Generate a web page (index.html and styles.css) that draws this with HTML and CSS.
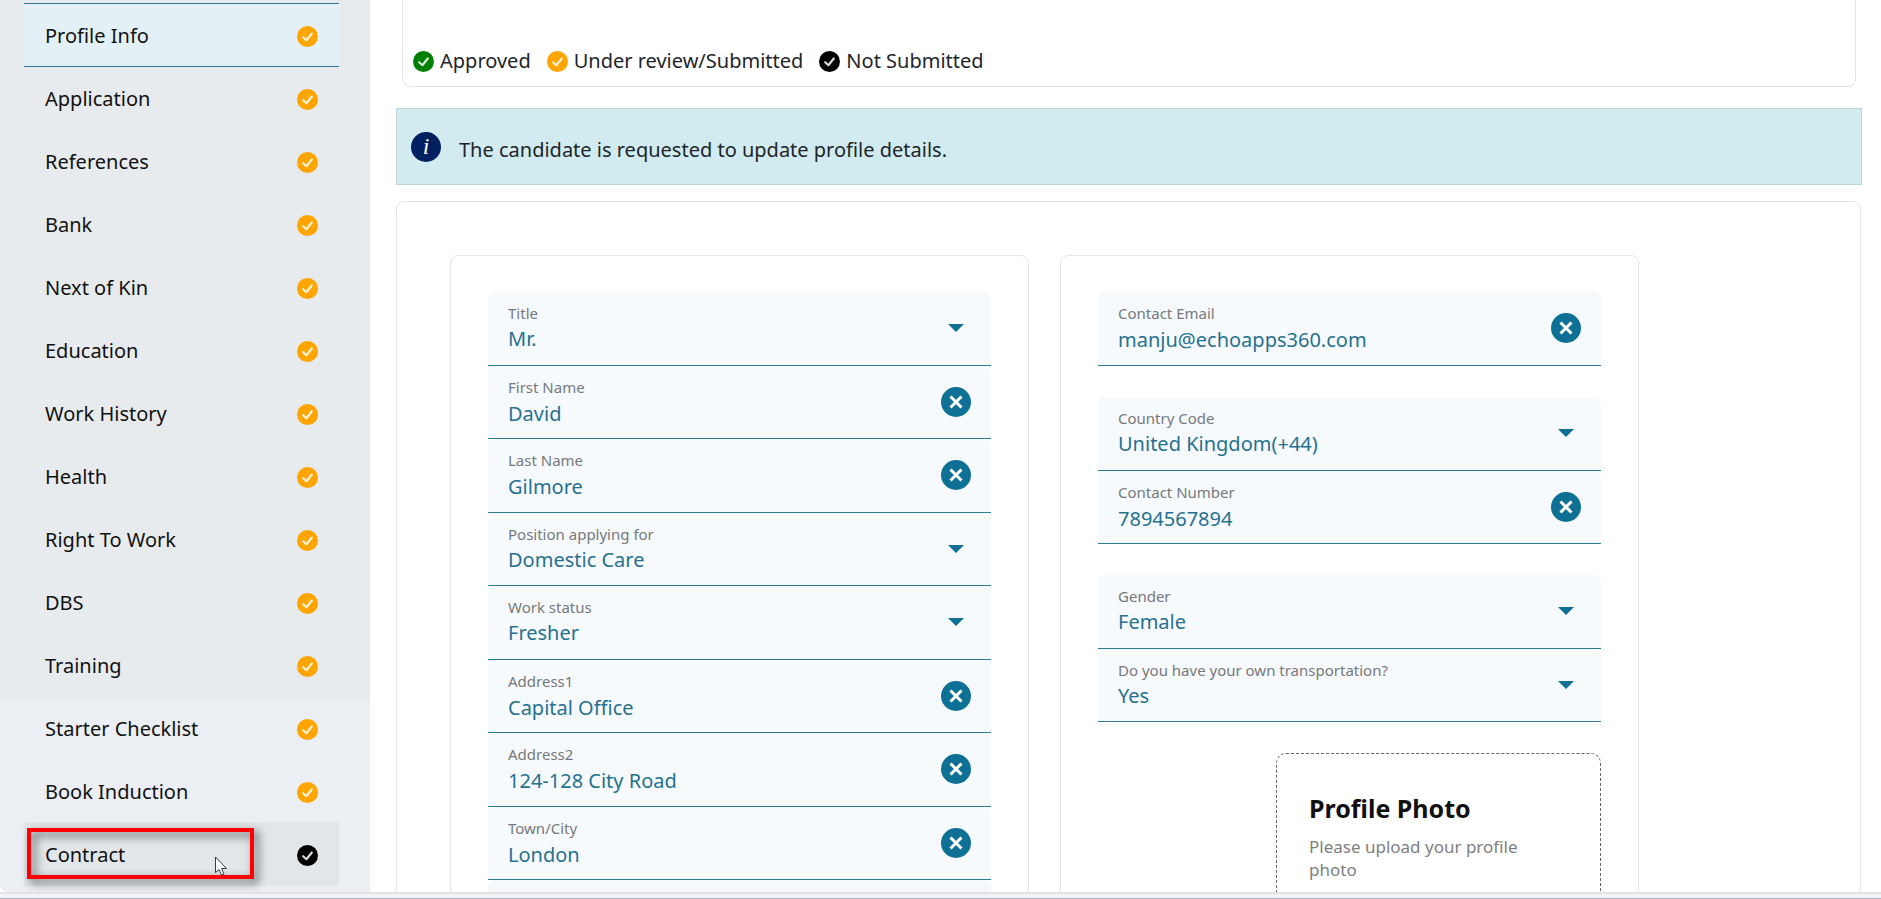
FILE: index.html
```html
<!DOCTYPE html>
<html lang="en">
<head>
<meta charset="utf-8">
<title>Profile Info</title>
<link rel="stylesheet" href="styles.css">
</head>
<body>
<svg class="sprite" aria-hidden="true">
  <symbol id="check" viewBox="0 0 21 21"><circle cx="10.500" cy="10.500" r="10.500" fill="currentColor"/><path d="M6.200 11.200l3.200 3 5.400-6.700" fill="none" stroke="#fff" stroke-opacity=".85" stroke-width="2.200" stroke-linecap="round" stroke-linejoin="round"/></symbol>
  <symbol id="clear" viewBox="0 0 30 30"><circle cx="15" cy="15" r="15" fill="currentColor"/><path d="M9.500 9.500l11 11M20.500 9.500l-11 11" fill="none" stroke="#fff" stroke-width="3"/></symbol>
  <symbol id="caret" viewBox="0 0 16 8"><path d="M0 0h16L8 8z" fill="currentColor"/></symbol>
</svg>
<div class="screen">
  <aside class="sidebar">
    <nav>
      <ul class="menu menu-main">
        <li><a class="active" href="#">Profile Info<svg class="check"><use href="#check"/></svg></a></li>
        <li><a href="#">Application<svg class="check"><use href="#check"/></svg></a></li>
        <li><a href="#">References<svg class="check"><use href="#check"/></svg></a></li>
        <li><a href="#">Bank<svg class="check"><use href="#check"/></svg></a></li>
        <li><a href="#">Next of Kin<svg class="check"><use href="#check"/></svg></a></li>
        <li><a href="#">Education<svg class="check"><use href="#check"/></svg></a></li>
        <li><a href="#">Work History<svg class="check"><use href="#check"/></svg></a></li>
        <li><a href="#">Health<svg class="check"><use href="#check"/></svg></a></li>
        <li><a href="#">Right To Work<svg class="check"><use href="#check"/></svg></a></li>
        <li><a href="#">DBS<svg class="check"><use href="#check"/></svg></a></li>
        <li><a href="#">Training<svg class="check"><use href="#check"/></svg></a></li>
      </ul>
      <ul class="menu menu-extra">
        <li><a href="#">Starter Checklist<svg class="check"><use href="#check"/></svg></a></li>
        <li><a href="#">Book Induction<svg class="check"><use href="#check"/></svg></a></li>
        <li class="marked"><a class="hovered" href="#">Contract<svg class="check missing"><use href="#check"/></svg></a>
          <span class="marker"></span>
          <svg class="pointer" viewBox="0 0 13 20"><path d="M.5 1v15.500l3.500-3 2.500 5.500 2.500-1-2.500-5.500h5z" fill="#fff" stroke="#333a48"/></svg>
        </li>
      </ul>
    </nav>
  </aside>
  <main class="content">
    <section class="legend">
      <span class="key"><svg class="check approved"><use href="#check"/></svg>Approved</span>
      <span class="key"><svg class="check"><use href="#check"/></svg>Under review/Submitted</span>
      <span class="key"><svg class="check missing"><use href="#check"/></svg>Not Submitted</span>
    </section>
    <div class="notice"><span class="info">i</span><p>The candidate is requested to update profile details.</p></div>
    <form class="profile">
      <section class="panel">
        <div class="group">
          <div class="field"><label for="title">Title</label><select id="title"><option>Mr.</option></select><svg class="caret"><use href="#caret"/></svg></div>
          <div class="field"><label for="first">First Name</label><input id="first" type="text" value="David"><button type="button" class="clear" aria-label="Clear first name"><svg><use href="#clear"/></svg></button></div>
          <div class="field"><label for="last">Last Name</label><input id="last" type="text" value="Gilmore"><button type="button" class="clear" aria-label="Clear last name"><svg><use href="#clear"/></svg></button></div>
          <div class="field"><label for="position">Position applying for</label><select id="position"><option>Domestic Care</option></select><svg class="caret"><use href="#caret"/></svg></div>
          <div class="field"><label for="status">Work status</label><select id="status"><option>Fresher</option></select><svg class="caret"><use href="#caret"/></svg></div>
          <div class="field"><label for="address1">Address1</label><input id="address1" type="text" value="Capital Office"><button type="button" class="clear" aria-label="Clear address 1"><svg><use href="#clear"/></svg></button></div>
          <div class="field"><label for="address2">Address2</label><input id="address2" type="text" value="124-128 City Road"><button type="button" class="clear" aria-label="Clear address 2"><svg><use href="#clear"/></svg></button></div>
          <div class="field"><label for="town">Town/City</label><input id="town" type="text" value="London"><button type="button" class="clear" aria-label="Clear town"><svg><use href="#clear"/></svg></button></div>
          <div class="field"></div>
        </div>
      </section>
      <section class="panel">
        <div class="group">
          <div class="field"><label for="email">Contact Email</label><input id="email" type="email" value="manju@echoapps360.com"><button type="button" class="clear" aria-label="Clear email"><svg><use href="#clear"/></svg></button></div>
        </div>
        <div class="group">
          <div class="field"><label for="country">Country Code</label><select id="country"><option>United Kingdom(+44)</option></select><svg class="caret"><use href="#caret"/></svg></div>
          <div class="field"><label for="phone">Contact Number</label><input id="phone" type="tel" value="7894567894"><button type="button" class="clear" aria-label="Clear contact number"><svg><use href="#clear"/></svg></button></div>
        </div>
        <div class="group">
          <div class="field"><label for="gender">Gender</label><select id="gender"><option>Female</option></select><svg class="caret"><use href="#caret"/></svg></div>
          <div class="field"><label for="transport">Do you have your own transportation?</label><select id="transport"><option>Yes</option></select><svg class="caret"><use href="#caret"/></svg></div>
        </div>
        <div class="photo">
          <h2>Profile Photo</h2>
          <p>Please upload your profile photo</p>
        </div>
      </section>
    </form>
  </main>
</div>
<footer class="edge"></footer>
</body>
</html>
```

FILE: styles.css
```css
* { box-sizing: border-box; }
body {
  margin: 0;
  height: 100vh;
  display: flex;
  flex-direction: column;
  overflow: hidden;
  background: #fff;
  color: #212529;
  font: 20px/30px "Noto Sans", "Open Sans", sans-serif;
}
.sprite { position: absolute; width: 0; height: 0; }
.screen { flex: 1; min-height: 0; display: flex; overflow: hidden; border-radius: 0 0 0 8px; }
.edge { flex: none; height: 7px; background: #f3f3f5; border-top: 2px solid #e2e2e4; border-bottom: 1px solid #aeb4c4; }

.sidebar { flex: none; width: 370px; background: #ebeef3; }
.menu { list-style: none; margin: 0; padding: 0 31px 0 24px; }
.menu-main { background: #e8ebed; padding-top: 3px; padding-bottom: 4px; }
.menu-extra { margin-top: -4px; }
.menu li { height: 63px; }
.menu a {
  display: flex;
  align-items: center;
  justify-content: space-between;
  height: 64px;
  padding: 2px 21px 0;
  border: solid transparent;
  border-width: 1px 0;
  color: #111;
  text-decoration: none;
}
.menu a.active { background: #e3f1f7; border-color: #2f7594; }
.menu a.hovered { background: #e2e6e9; }
.check { flex: none; width: 21px; height: 21px; color: #ffa500; }
.check.approved { color: #008000; }
.check.missing { color: #000; }
.marked { position: relative; }
.marker {
  position: absolute;
  inset: 6px 61px 6px 3px;
  width: 227px;
  border: 4px solid #f00;
  filter: drop-shadow(4px 4px 5px rgba(0, 0, 0, .65));
  pointer-events: none;
}
.pointer { position: absolute; left: 191px; top: 34px; width: 13px; height: 20px; }

.content { flex: 1; min-width: 0; padding: 0 19px 0 26px; display: flex; flex-direction: column; }
.content > * { flex: none; }
.legend {
  margin: 0 6px;
  padding: 46px 10px 10px;
  display: flex;
  gap: 16px;
  border: 1px solid #e4e5e6;
  border-top: 0;
  border-radius: 0 0 8px 8px;
}
.key { display: flex; align-items: center; gap: 6px; }
.notice {
  margin: 21px 0 16px;
  padding: 9px 14px 0;
  height: 77px;
  display: flex;
  gap: 18px;
  background: #d1ebf0;
  border: 1px solid #bfd4d9;
}
.notice p { margin: 17px 0 0; }
.info {
  width: 30px;
  height: 30px;
  margin-top: 14px;
  border-radius: 50%;
  background: #002060;
  color: #fff;
  font: italic 24px/28px "Liberation Serif", serif;
  text-align: center;
}
.profile {
  padding: 53px;
  margin-right: 1px;
  display: grid;
  grid-template-columns: repeat(2, minmax(0, 579px));
  gap: 31px;
  border: 1px solid #e4e5e6;
  border-radius: 8px;
}
.panel { padding: 36px 37px; border: 1px solid #e6e7e8; border-radius: 8px; display: flex; flex-direction: column; gap: 31px; }
.field {
  position: relative;
  height: 74px;
  padding: 11px 20px 0;
  background: #f6fafd;
  border-bottom: 1px solid #2f7d93;
  border-radius: 7px 7px 0 0;
}
.field:nth-child(even) { height: 73px; }
.field label { display: block; font-size: 15px; line-height: 20px; color: #76797b; }
.field input, .field select {
  display: block;
  width: 100%;
  height: 32px;
  padding: 0;
  border: 0;
  outline: 0;
  appearance: none;
  background: none;
  color: #26718f;
  font: inherit;
}
.clear {
  position: absolute;
  right: 20px;
  top: 21px;
  width: 30px;
  height: 30px;
  padding: 0;
  border: 0;
  background: none;
  color: #0e7094;
}
.clear svg { display: block; width: 30px; height: 30px; }
.caret { position: absolute; right: 27px; top: 32px; width: 16px; height: 8px; color: #0e7094; pointer-events: none; }
.photo { align-self: flex-end; width: 325px; height: 320px; padding: 38px 32px; border: 1px dashed #666; border-radius: 10px; }
.photo h2 { margin: 0; font-size: 25px; line-height: 32px; color: #111; }
.photo p { margin: 11px 0 0; font-size: 17px; line-height: 23px; color: #808080; }
```
